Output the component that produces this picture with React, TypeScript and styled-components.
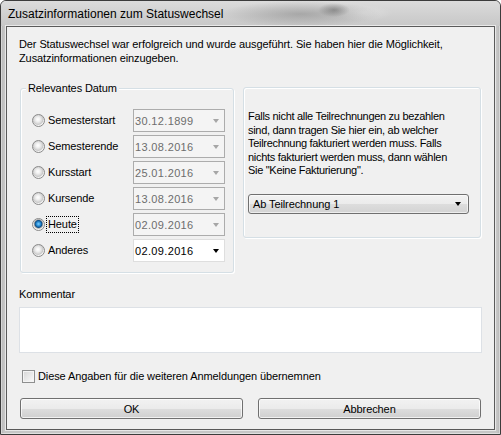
import React from "react";
import styled, { createGlobalStyle } from "styled-components";

const GlobalStyle = createGlobalStyle`
  html, body {
    margin: 0;
    padding: 0;
    background: #ffffff;
  }
  body {
    font-family: "Liberation Sans", Arial, sans-serif;
    font-size: 11px;
    letter-spacing: -0.1px;
    color: #000;
  }
`;

const dateRows = [
  { label: "Semesterstart", value: "30.12.1899" },
  { label: "Semesterende", value: "13.08.2016" },
  { label: "Kursstart", value: "25.01.2016" },
  { label: "Kursende", value: "13.08.2016" },
  { label: "Heute", value: "02.09.2016", checked: true },
  { label: "Anderes", value: "02.09.2016", enabled: true },
];

function StatusChangeDialog() {
  return (
    <Window>
      <TitleBar>Zusatzinformationen zum Statuswechsel</TitleBar>
      <Client>
        <Intro>
          Der Statuswechsel war erfolgreich und wurde ausgeführt. Sie haben hier die Möglichkeit,
          <br />
          Zusatzinformationen einzugeben.
        </Intro>

        <GroupRow>
          <DateGroup>
            <Caption>Relevantes Datum</Caption>
            {dateRows.map((row) => (
              <DateRow key={row.label}>
                <RadioLabel>
                  <Radio $checked={!!row.checked} />
                  <RadioText $focused={!!row.checked}>{row.label}</RadioText>
                </RadioLabel>
                <DateCombo $enabled={!!row.enabled}>
                  {row.value}
                  <Arrow $enabled={!!row.enabled} />
                </DateCombo>
              </DateRow>
            ))}
          </DateGroup>

          <BillingGroup>
            <BillingText>
              Falls nicht alle Teilrechnungen zu bezahlen
              <br />
              sind, dann tragen Sie hier ein, ab welcher
              <br />
              Teilrechnung fakturiert werden muss. Falls
              <br />
              nichts fakturiert werden muss, dann wählen
              <br />
              Sie "Keine Fakturierung".
            </BillingText>
            <Select>
              Ab Teilrechnung 1
              <Arrow $enabled />
            </Select>
          </BillingGroup>
        </GroupRow>

        <FieldLabel>Kommentar</FieldLabel>
        <CommentBox />

        <CheckRow>
          <CheckBox />
          Diese Angaben für die weiteren Anmeldungen übernemnen
        </CheckRow>

        <ButtonRow>
          <Button>OK</Button>
          <Button>Abbrechen</Button>
        </ButtonRow>
      </Client>
    </Window>
  );
}

const Window = styled.div`
  width: 501px;
  height: 435px;
  box-sizing: border-box;
  display: flex;
  flex-direction: column;
  border: 1px solid #3c3c3c;
  border-radius: 6px 6px 0 0;
  padding: 0 5px 4px;
  overflow: hidden;
  background: linear-gradient(90deg, #b4b4b4 0px, #c6c6c6 3px, #c6c6c6 calc(100% - 3px), #b4b4b4 100%);
  box-shadow: inset 0 0 0 1px rgba(255, 255, 255, 0.45);
`;

const TitleBar = styled.div`
  height: 25px;
  margin: 0 -5px;
  padding: 0 7px;
  display: flex;
  align-items: center;
  font-family: "Liberation Sans", Arial, sans-serif;
  font-size: 12px;
  letter-spacing: 0;
  color: #000;
  background:
    radial-gradient(ellipse 80px 13px at 300px 13px, rgba(80, 80, 80, 0.32), transparent),
    radial-gradient(ellipse 16px 7px at 333px 9px, rgba(40, 40, 40, 0.35), transparent),
    radial-gradient(ellipse 30px 8px at 362px 12px, rgba(255, 255, 255, 0.25), transparent),
    linear-gradient(180deg, #dcdcdc 0%, #cfcfcf 60%, #c8c8c8 100%);
`;

const Client = styled.div`
  flex: 1;
  display: flex;
  flex-direction: column;
  border: 1px solid #5a5a5a;
  background: #f0f0f0;
  padding: 10px 12px 0;
  box-shadow: 0 0 0 1px rgba(255, 255, 255, 0.6);
`;

const Intro = styled.div`
  line-height: 14px;
`;

const GroupRow = styled.div`
  display: flex;
  align-items: flex-start;
  gap: 9px;
  margin: 23px 0 0 1px;
`;

const GroupBox = styled.div`
  position: relative;
  box-sizing: border-box;
  border: 1px solid #d5dfe5;
  border-radius: 3px;
  box-shadow: inset 1px 1px 0 #ffffff, 1px 1px 0 #ffffff;
`;

const DateGroup = styled(GroupBox)`
  width: 214px;
  padding: 20px 8px 10px 11px;
  display: grid;
  row-gap: 3px;
`;

const Caption = styled.span`
  position: absolute;
  top: -7px;
  left: 5px;
  padding: 0 2px;
  line-height: 13px;
  background: #f0f0f0;
`;

const DateRow = styled.div`
  display: grid;
  grid-template-columns: 101px 92px;
  align-items: center;
  height: 23px;
`;

const RadioLabel = styled.div`
  display: flex;
  align-items: center;
`;

const Radio = styled.span<{ $checked: boolean }>`
  width: 13px;
  height: 13px;
  box-sizing: border-box;
  border-radius: 50%;
  border: 1px solid #8a8a8a;
  margin-right: 2px;
  background: ${(p) =>
    p.$checked
      ? "radial-gradient(circle at 50% 45%, #7fd0ff 0px, #2b8fd6 2px, #0c4f8a 3.5px, #9a9a9a 4.2px, #e4e4e4 5px, #fbfbfb 6px)"
      : "radial-gradient(circle at 45% 40%, #ffffff 0px, #f2f2f2 2px, #dadada 4px, #c8c8c8 5px, #f4f4f4 6px)"};
`;

const RadioText = styled.span<{ $focused: boolean }>`
  padding: 1px 1px;
  line-height: 13px;
  outline: ${(p) => (p.$focused ? "1px dotted #000" : "none")};
  outline-offset: 0;
`;

const DateCombo = styled.div<{ $enabled: boolean }>`
  height: 23px;
  box-sizing: border-box;
  display: flex;
  align-items: center;
  justify-content: space-between;
  padding: 0 5px 0 1px;
  font-size: 11px;
  letter-spacing: 0.35px;
  color: ${(p) => (p.$enabled ? "#000" : "#6d6d6d")};
  background: ${(p) => (p.$enabled ? "#ffffff" : "#f4f4f4")};
  border: 1px solid ${(p) => (p.$enabled ? "#dedede" : "#acacac")};
`;

const Arrow = styled.span<{ $enabled?: boolean }>`
  width: 0;
  height: 0;
  border-left: 3.5px solid transparent;
  border-right: 3.5px solid transparent;
  border-top: 4px solid ${(p) => (p.$enabled ? "#000" : "#a6a6a6")};
`;

const BillingGroup = styled(GroupBox)`
  width: 238px;
  margin-top: -1px;
  padding: 22px 12px 23px 4px;
`;

const BillingText = styled.div`
  line-height: 13.5px;
  letter-spacing: -0.3px;
`;

const Select = styled.div`
  margin-top: 16px;
  height: 20px;
  box-sizing: border-box;
  width: 221px;
  display: flex;
  align-items: center;
  justify-content: space-between;
  padding: 0 7px 0 4px;
  border: 1px solid #707070;
  border-radius: 3px;
  background: linear-gradient(180deg, #f2f2f2 0%, #ebebeb 50%, #dddddd 51%, #d3d3d3 100%);
  box-shadow: inset 0 0 0 1px rgba(255, 255, 255, 0.6);
`;

const FieldLabel = styled.div`
  margin-top: 15px;
  line-height: 13px;
`;

const CommentBox = styled.div`
  margin-top: 6px;
  height: 46px;
  box-sizing: border-box;
  background: #ffffff;
  border: 1px solid #dde1e6;
`;

const CheckRow = styled.label`
  margin: 17px 0 0 3px;
  display: flex;
  align-items: center;
  gap: 3px;
  line-height: 13px;
`;

const CheckBox = styled.span`
  width: 13px;
  height: 13px;
  box-sizing: border-box;
  border: 1px solid #8e8f8f;
  background: linear-gradient(135deg, #d6d6d6 0%, #eaeaea 55%, #fafafa 100%);
  box-shadow: inset 0 0 0 1px #f4f4f4;
`;

const ButtonRow = styled.div`
  margin: 15px 0 0 1px;
  display: flex;
  gap: 15px;
`;

const Button = styled.button`
  width: 223px;
  height: 21px;
  padding: 0;
  font-family: "Liberation Sans", Arial, sans-serif;
  font-size: 11px;
  letter-spacing: -0.1px;
  color: #000;
  border: 1px solid #707070;
  border-radius: 3px;
  background: linear-gradient(180deg, #f2f2f2 0%, #ebebeb 50%, #dddddd 51%, #cfcfcf 100%);
  box-shadow: inset 0 0 0 1px rgba(255, 255, 255, 0.7);
`;

export default function App() {
  return (
    <>
      <GlobalStyle />
      <StatusChangeDialog />
    </>
  );
}
